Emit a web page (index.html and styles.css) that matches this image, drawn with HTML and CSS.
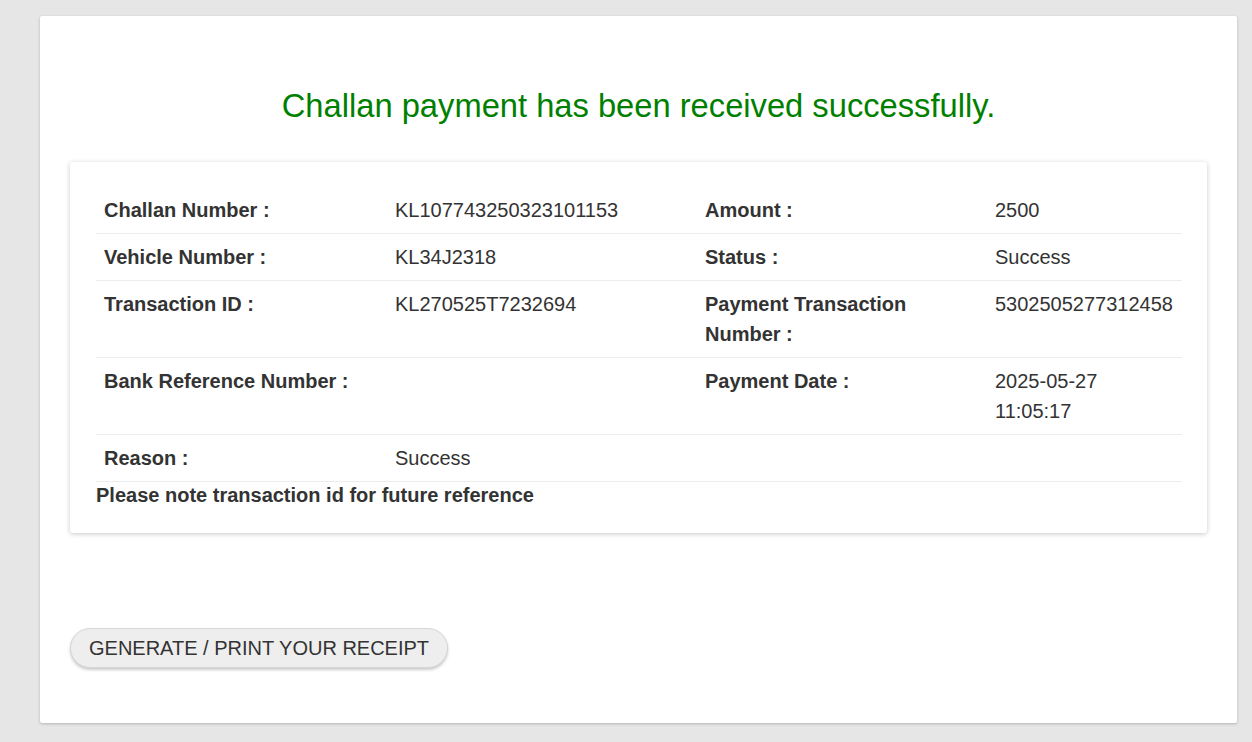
FILE: index.html
```html
<!DOCTYPE html>
<html lang="en">
<head>
<meta charset="utf-8">
<title>Challan Payment</title>
<link rel="stylesheet" href="styles.css">
</head>
<body>
<div class="page">
  <div class="card">
    <h2 class="title">Challan payment has been received successfully.</h2>
    <div class="panel">
      <table class="details">
        <colgroup>
          <col class="c1"><col class="c2"><col class="c3"><col class="c4">
        </colgroup>
        <tbody>
          <tr>
            <th>Challan Number :</th><td>KL107743250323101153</td>
            <th>Amount :</th><td>2500</td>
          </tr>
          <tr>
            <th>Vehicle Number :</th><td>KL34J2318</td>
            <th>Status :</th><td>Success</td>
          </tr>
          <tr>
            <th>Transaction ID :</th><td>KL270525T7232694</td>
            <th>Payment Transaction Number :</th><td>5302505277312458</td>
          </tr>
          <tr>
            <th>Bank Reference Number :</th><td></td>
            <th>Payment Date :</th><td>2025-05-27 11:05:17</td>
          </tr>
          <tr>
            <th>Reason :</th><td>Success</td>
            <th></th><td></td>
          </tr>
        </tbody>
      </table>
      <p class="note">Please note transaction id for future reference</p>
    </div>
    <div class="actions">
      <button class="btn" type="button">GENERATE / PRINT YOUR RECEIPT</button>
    </div>
  </div>
</div>
</body>
</html>
```

FILE: styles.css
```css
html, body {
  margin: 0;
  padding: 0;
}
body {
  background: #e5e6e5;
  font-family: "Liberation Sans", Arial, sans-serif;
  color: #333;
}
.page {
  padding: 16px 15px 19px 40px;
}
.card {
  background: #fff;
  border-radius: 2px;
  box-shadow: 0 1px 3px rgba(0, 0, 0, 0.22);
  padding: 72px 30px 55px 30px;
  height: 707px;
  box-sizing: border-box;
}
.title {
  margin: 0 0 38px 0;
  font-size: 32.7px;
  line-height: 36px;
  font-weight: normal;
  color: #008000;
  text-align: center;
}
.panel {
  background: #fff;
  border-radius: 3px;
  box-shadow: 0 1px 5px rgba(0, 0, 0, 0.22);
  padding: 25px 25px 25px 26px;
}
.details {
  width: 100%;
  border-collapse: collapse;
  table-layout: fixed;
  font-size: 20px;
  line-height: 30px;
}
.c1 { width: 291px; }
.c2 { width: 310px; }
.c3 { width: 290px; }
.c4 { width: 195px; }
.details th,
.details td {
  padding: 8px;
  text-align: left;
  vertical-align: top;
  border-bottom: 1px solid #ececec;
}
.details th {
  font-weight: bold;
}
.details td {
  font-weight: normal;
}
.note {
  margin: 0;
  font-size: 20px;
  line-height: 26px;
  font-weight: bold;
}
.actions {
  margin-top: 95px;
}
.btn {
  font-family: "Liberation Sans", Arial, sans-serif;
  font-size: 20px;
  line-height: 20px;
  color: #333;
  background: #eeeeee;
  border: 1px solid #d6d6d6;
  border-radius: 20px;
  height: 40px;
  padding: 0 18px;
  box-shadow: 0 2px 3px rgba(0, 0, 0, 0.2);
  cursor: pointer;
}
```
